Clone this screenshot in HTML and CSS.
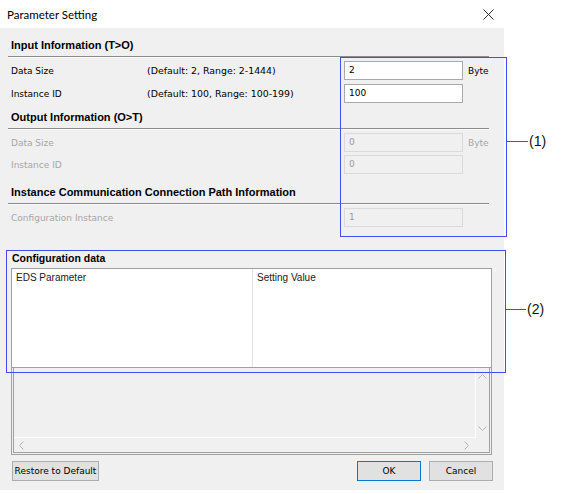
FILE: index.html
```html
<!DOCTYPE html>
<html>
<head>
<meta charset="utf-8">
<link rel="stylesheet" href="styles.css">
</head>
<body>
<div class="window">
  <div class="titlebar">
    <span class="title">Parameter Setting</span>
    <svg class="close" width="11" height="11" viewBox="0 0 11 11"><path d="M0.5 0.5 L10.5 10.5 M10.5 0.5 L0.5 10.5" stroke="#2b2b2b" stroke-width="1" fill="none"/></svg>
  </div>
  <div class="dialog">
    <section class="group g-input">
      <h2 class="ghead">Input Information (T&gt;O)</h2>
      <div class="sep"></div>
      <div class="rows">
        <div class="row"><span class="lbl">Data Size</span><span class="hint">(Default: 2, Range: 2-1444)</span><span class="field">2</span><span class="unit">Byte</span></div>
        <div class="row"><span class="lbl">Instance ID</span><span class="hint">(Default: 100, Range: 100-199)</span><span class="field">100</span><span class="unit"></span></div>
      </div>
    </section>
    <section class="group g-output">
      <h2 class="ghead">Output Information (O&gt;T)</h2>
      <div class="sep"></div>
      <div class="rows tight disabled">
        <div class="row"><span class="lbl">Data Size</span><span class="hint"></span><span class="field">0</span><span class="unit">Byte</span></div>
        <div class="row"><span class="lbl">Instance ID</span><span class="hint"></span><span class="field">0</span><span class="unit"></span></div>
      </div>
    </section>
    <section class="group g-path">
      <h2 class="ghead">Instance Communication Connection Path Information</h2>
      <div class="sep"></div>
      <div class="rows disabled">
        <div class="row"><span class="lbl">Configuration Instance</span><span class="hint"></span><span class="field">1</span><span class="unit"></span></div>
      </div>
    </section>
    <section class="cfg">
      <h2 class="cfg-head">Configuration data</h2>
      <div class="listview">
        <div class="col"><div class="colhead">EDS Parameter</div></div>
        <div class="col"><div class="colhead">Setting Value</div></div>
      </div>
      <div class="scrollpane">
        <div class="scrollinner">
          <div class="mainarea"></div>
          <div class="vscroll">
            <svg width="9" height="5" viewBox="0 0 9 5"><path d="M0.5 4.5 L4.5 0.5 L8.5 4.5" stroke="#b4b4b4" fill="none"/></svg>
            <svg width="9" height="5" viewBox="0 0 9 5"><path d="M0.5 0.5 L4.5 4.5 L8.5 0.5" stroke="#b4b4b4" fill="none"/></svg>
          </div>
          <div class="hscroll">
            <svg width="5" height="9" viewBox="0 0 5 9"><path d="M4.5 0.5 L0.5 4.5 L4.5 8.5" stroke="#b4b4b4" fill="none"/></svg>
            <svg width="5" height="9" viewBox="0 0 5 9"><path d="M0.5 0.5 L4.5 4.5 L0.5 8.5" stroke="#b4b4b4" fill="none"/></svg>
          </div>
          <div class="corner"></div>
        </div>
      </div>
    </section>
    <div class="buttons">
      <button class="btn btn-restore">Restore to Default</button>
      <button class="btn btn-ok">OK</button>
      <button class="btn btn-cancel">Cancel</button>
    </div>
  </div>

  <div class="ann ann1"></div>
  <div class="ann-line line1"></div>
  <div class="ann-label label1">(1)</div>
  <div class="ann ann2"></div>
  <div class="ann-line line2"></div>
  <div class="ann-label label2">(2)</div>
</div>
</body>
</html>
```
FILE: styles.css
```css
html, body {
  margin: 0;
  padding: 0;
  background: #ffffff;
}
body {
  width: 570px;
  height: 494px;
  overflow: hidden;
}
.window {
  position: relative;
  width: 570px;
  height: 494px;
  background: #ffffff;
}
.titlebar {
  height: 28px;
  box-sizing: border-box;
  display: flex;
  align-items: center;
  justify-content: space-between;
  padding: 0 76px 0 7px;
  font: 11.5px/16px Lato, "Noto Sans", sans-serif;
  color: #000;
}
.title {
  margin-top: 1px;
}
.close {
  display: block;
  margin-top: 1px;
}
.dialog {
  display: flow-root;
  width: 504px;
  height: 462px;
  background: #f0f0f0;
  overflow: hidden;
  font-family: "DejaVu Sans", sans-serif;
  font-size: 9px;
  color: #000;
}
.ghead {
  margin: 10px 0 0 0;
  padding: 0 0 4px 11px;
  font: bold 11px/14px "Liberation Sans", Arial, sans-serif;
  color: #000;
}
.g-output .ghead {
  margin-top: 7px;
}
.g-path .ghead {
  margin-top: 11px;
}
.sep {
  height: 0;
  margin: 0 15px 0 8px;
  border-top: 1px solid #8c8c8c;
  border-bottom: 1px solid #fbfbfb;
}
.rows {
  display: flex;
  flex-direction: column;
  gap: 4px;
  margin-top: 3px;
  padding-left: 11px;
}
.rows.tight {
  gap: 3px;
}
.row {
  display: grid;
  grid-template-columns: 136px 197px 119px auto;
  align-items: center;
  height: 19px;
}
.hint {
  font-size: 9.4px;
}
.field {
  height: 19px;
  box-sizing: border-box;
  border: 1px solid #a9a9a9;
  background: #ffffff;
  padding-left: 4px;
  line-height: 17px;
}
.unit {
  padding-left: 5px;
}
.disabled {
  color: #a6a6a6;
}
.disabled .field {
  background: #f0f0f0;
  border-color: #dadada;
  color: #9a9a9a;
}
.cfg-head {
  margin: 24px 0 0 0;
  padding-left: 12px;
  font: bold 10.5px/14px "Liberation Sans", Arial, sans-serif;
  color: #000;
}
.listview {
  margin: 3px 12px 0 11px;
  height: 100px;
  box-sizing: border-box;
  border: 1px solid #a0a0a0;
  background: #ffffff;
  display: grid;
  grid-template-columns: 240px 1fr;
  font: 10px/18px "Liberation Sans", Arial, sans-serif;
  color: #1a1a1a;
}
.col + .col {
  border-left: 1px solid #e3e3e3;
}
.colhead {
  padding: 0 0 0 4px;
  height: 18px;
}
.scrollpane {
  margin: 0 12px 0 11px;
  height: 87px;
  box-sizing: border-box;
  border: 1px solid #a0a0a0;
  border-top: none;
  padding: 0 1px 1px 1px;
}
.scrollinner {
  height: 100%;
  box-sizing: border-box;
  border: 1px solid #a0a0a0;
  border-top: none;
  display: grid;
  grid-template-columns: 1fr 13px;
  grid-template-rows: 1fr 14px;
}
.mainarea {
  border-right: 1px solid #fdfdfd;
  border-bottom: 1px solid #fdfdfd;
}
.vscroll {
  display: flex;
  flex-direction: column;
  justify-content: space-between;
  align-items: center;
  padding: 6px 0 7px 0;
}
.hscroll {
  display: flex;
  justify-content: space-between;
  align-items: center;
  padding: 0 7px 0 5px;
}
.vscroll svg, .hscroll svg {
  display: block;
}
.buttons {
  display: flex;
  margin: 6px 11px 0 12px;
}
.btn {
  height: 20px;
  box-sizing: border-box;
  border: 1px solid #adadad;
  background: #e1e1e1;
  font: 9px/16px "DejaVu Sans", sans-serif;
  color: #000;
  padding: 0;
  margin: 0;
}
.btn-restore {
  width: 87px;
  margin-right: auto;
}
.btn-ok {
  width: 64px;
  border-color: #0078d7;
}
.btn-cancel {
  width: 64px;
  margin-left: 8px;
}
.ann {
  position: absolute;
  box-sizing: border-box;
  border: 1px solid #4848f4;
}
.ann1 {
  left: 340px;
  top: 57px;
  width: 167px;
  height: 180px;
}
.ann2 {
  left: 6px;
  top: 250px;
  width: 500px;
  height: 123px;
}
.ann-line {
  position: absolute;
  height: 1px;
  background: #4848f4;
}
.line1 {
  left: 507px;
  top: 141px;
  width: 21px;
}
.line2 {
  left: 506px;
  top: 309px;
  width: 20px;
}
.ann-label {
  position: absolute;
  font: 14px/16px "Liberation Sans", Arial, sans-serif;
  color: #111;
}
.label1 {
  left: 529px;
  top: 133px;
}
.label2 {
  left: 527px;
  top: 301px;
}
```
